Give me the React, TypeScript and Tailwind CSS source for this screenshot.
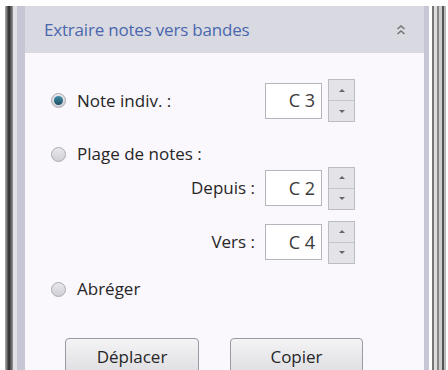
import React from "react";

function Radio({ checked }: { checked?: boolean }) {
  return (
    <div className="w-[15px] h-[15px] rounded-full border border-[#a9a9b3] bg-gradient-to-b from-[#e8e8ec] to-[#cfcfd6] flex items-center justify-center shrink-0">
      {checked && <div className="w-[9px] h-[9px] rounded-full bg-gradient-to-b from-[#3f8fa6] to-[#1f4f66]" />}
    </div>
  );
}

function Spin({ value }: { value: string }) {
  return (
    <div className="flex items-center gap-[6px]">
      <div className="w-[57px] h-[36px] border border-[#b5b5bd] bg-white flex items-center justify-end pr-[6px] text-[18px] text-[#3a3a3a]">
        {value}
      </div>
      <div className="w-[27px] h-[43px] border border-[#bcbcc4] bg-[#e4e4e8] flex flex-col">
        <div className="flex-1 flex items-center justify-center border-b border-[#c4c4cc]">
          <div className="w-0 h-0 border-l-[3px] border-r-[3px] border-b-[3px] border-l-transparent border-r-transparent border-b-[#666]" />
        </div>
        <div className="flex-1 flex items-center justify-center">
          <div className="w-0 h-0 border-l-[3px] border-r-[3px] border-t-[3px] border-l-transparent border-r-transparent border-t-[#666]" />
        </div>
      </div>
    </div>
  );
}

export default function App() {
  return (
    <div className="w-[448px] h-[370px] bg-white flex overflow-hidden" style={{ fontFamily: '"Open Sans", "Noto Sans", sans-serif' }}>
      <div className="w-[5px] shrink-0" />
      <div className="w-[8px] shrink-0 mt-[6px] bg-gradient-to-r from-[#b8b8b8] via-[#2a2a2a] to-[#9a9a9a]" />
      <div className="w-[4px] shrink-0 mt-[6px] bg-[#e2e2e6]" />
      <div className="flex-1 mt-[6px] flex border-l-[8px] border-[#c6c6d4] border-r-[5px] bg-[#faf8fc] overflow-hidden">
        <div className="flex-1 flex flex-col overflow-hidden">
          <div className="h-[47px] shrink-0 bg-[#d9d9e2] flex items-center justify-between pl-[19px] pr-[18px]">
            <span className="text-[17px] text-[#4a67ad] tracking-[-0.2px]">Extraire notes vers bandes</span>
            <svg width="10" height="12" viewBox="0 0 10 12">
              <path d="M1.5 5 L5 2 L8.5 5" fill="none" stroke="#777" strokeWidth="1.6" />
              <path d="M1.5 10 L5 7 L8.5 10" fill="none" stroke="#777" strokeWidth="1.6" />
            </svg>
          </div>
          <div className="flex-1 flex flex-col pl-[26px] text-[17px] font-medium text-[#262626]">
            <div className="flex shrink-0 items-center mt-[26px] h-[43px]">
              <Radio checked />
              <span className="ml-[11px] w-[188px]">Note indiv. :</span>
              <Spin value="C 3" />
            </div>
            <div className="flex shrink-0 items-center mt-[20px] h-[24px]">
              <Radio />
              <span className="ml-[11px]">Plage de notes :</span>
            </div>
            <div className="flex shrink-0 items-center justify-end pr-[69px] h-[44px]">
              <span className="mr-[10px]">Depuis :</span>
              <Spin value="C 2" />
            </div>
            <div className="flex shrink-0 items-center justify-end mt-[10px] pr-[69px] h-[44px]">
              <span className="mr-[10px]">Vers :</span>
              <Spin value="C 4" />
            </div>
            <div className="flex shrink-0 items-center mt-[13px] h-[24px]">
              <Radio />
              <span className="ml-[11px]">Abréger</span>
            </div>
            <div className="flex shrink-0 mt-[37px] pl-[14px] gap-[31px]">
              <div className="w-[134px] h-[40px] rounded-[4px] border border-[#9a9aa2] bg-gradient-to-b from-[#f4f4f6] to-[#dcdce0] flex items-center justify-center pb-[2px]">Déplacer</div>
              <div className="w-[133px] h-[40px] rounded-[4px] border border-[#9a9aa2] bg-gradient-to-b from-[#f4f4f6] to-[#dcdce0] flex items-center justify-center pb-[2px]">Copier</div>
            </div>
          </div>
        </div>
      </div>
      <div className="w-[3px] shrink-0" />
      <div className="w-[14px] shrink-0 mt-[6px] flex">
        <div className="w-[2px] bg-[#777]" />
        <div className="w-[3px] bg-[#ddd]" />
        <div className="w-[2px] bg-[#888]" />
        <div className="w-[3px] bg-[#ccc]" />
        <div className="w-[2px] bg-[#555]" />
        <div className="w-[2px] bg-[#bbb]" />
      </div>
      <div className="w-[2px] shrink-0" />
    </div>
  );
}
